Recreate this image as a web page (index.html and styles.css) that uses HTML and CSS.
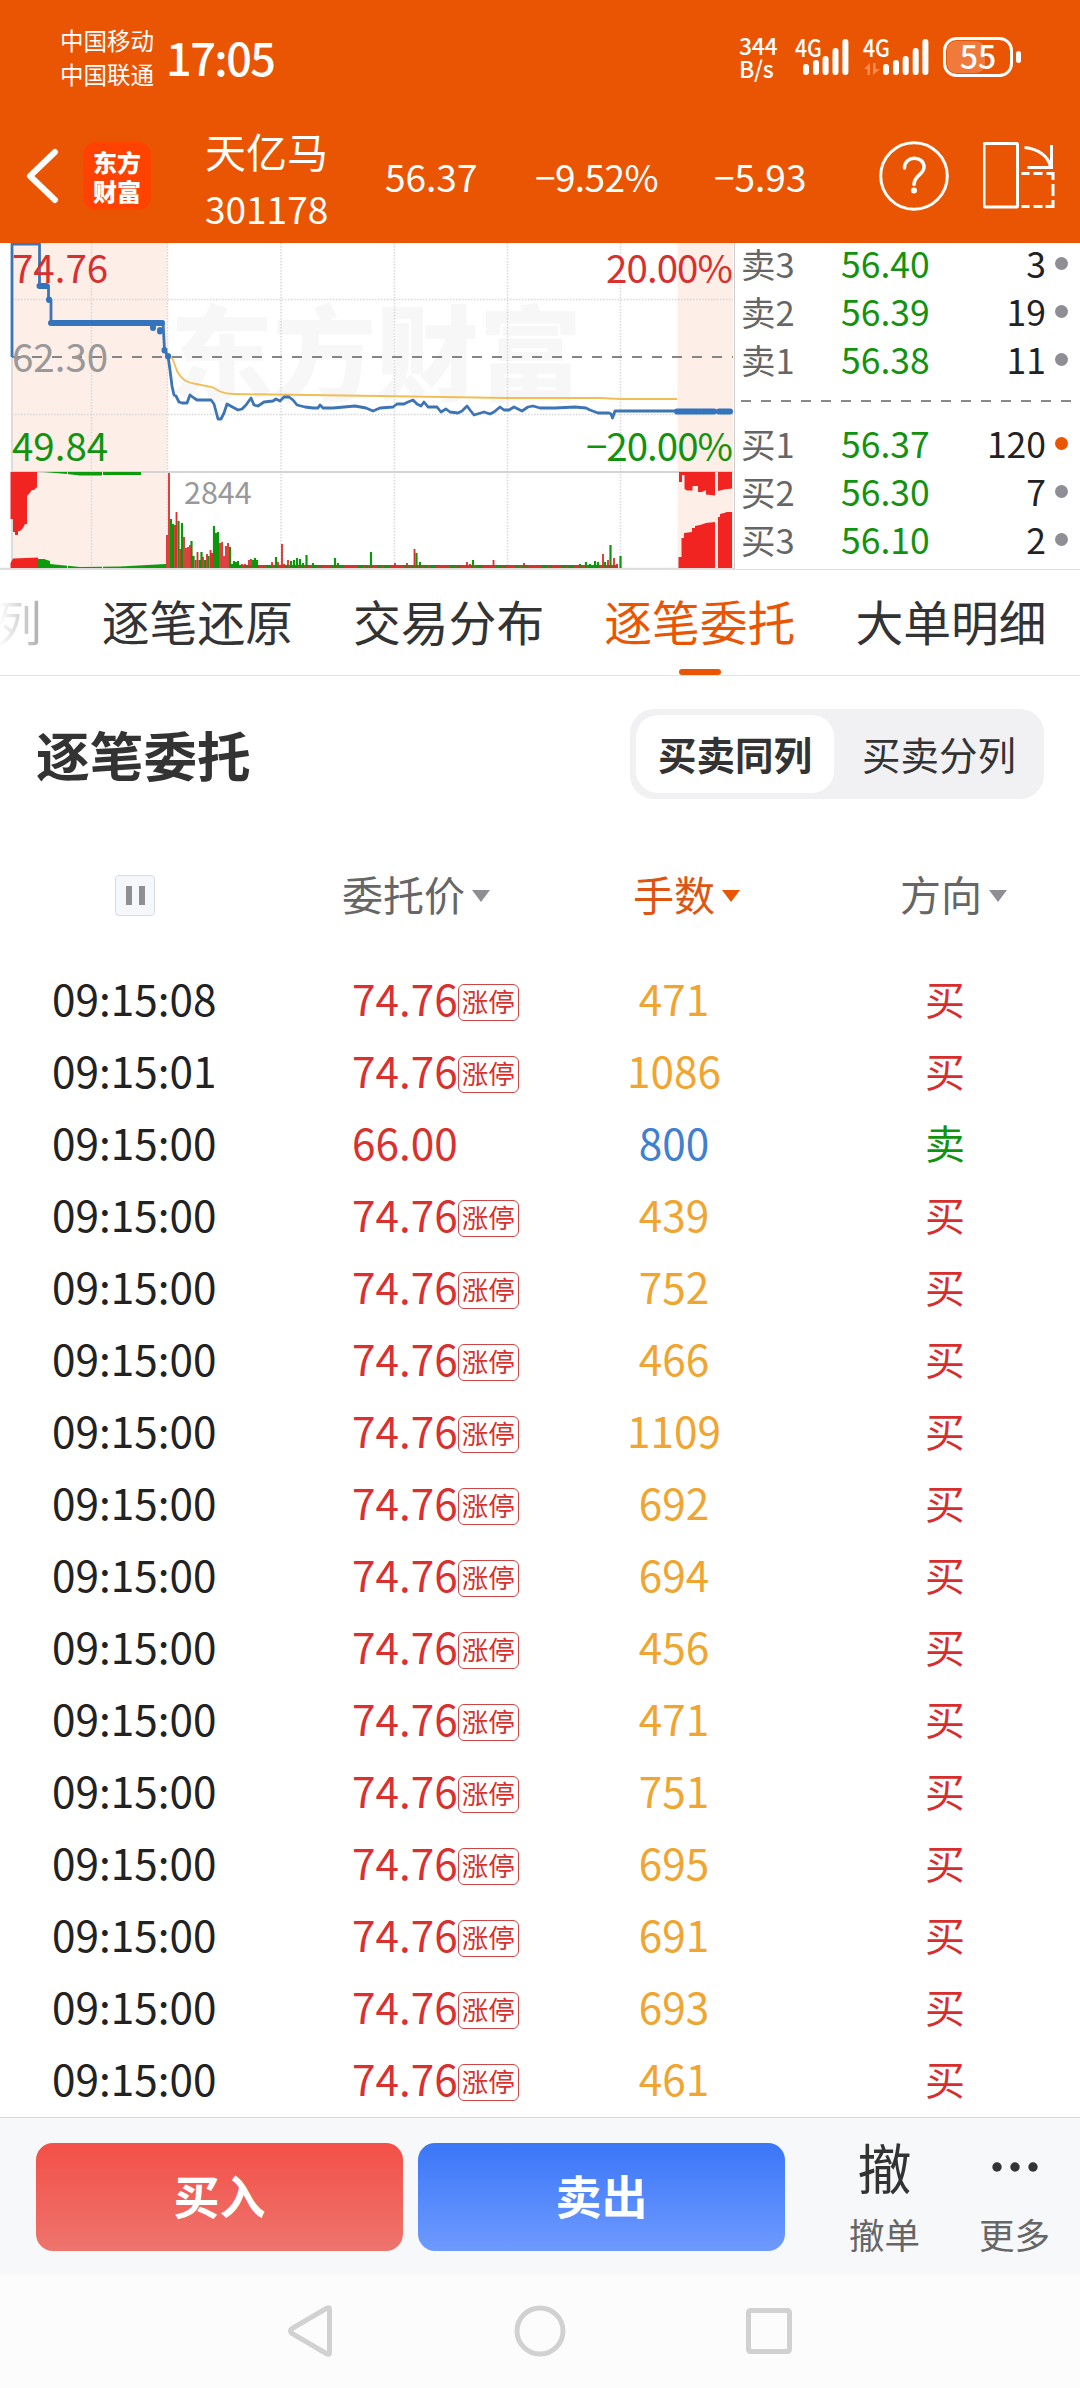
FILE: index.html
```html
<!DOCTYPE html>
<html lang="zh-CN">
<head>
    <meta charset="UTF-8">
    <meta name="viewport" content="width=device-width, initial-scale=1.0">
    <title>天亿马 301178 逐笔委托</title>
    <link rel="stylesheet" href="styles.css">
</head>
<body>
    <header class="top">
        <div class="status-bar">
            <div class="carriers"><span>中国移动</span><span>中国联通</span></div>
            <div class="clock">17:05</div>
            <div class="net-speed"><span>344</span><span>B/s</span></div>
            <!-- signal + battery -->
            <svg class="signal" width="230" height="50" viewBox="794 32 230 50">
                <g stroke="#fff" stroke-width="6" stroke-linecap="round">
                    <path d="M806 67V72M816 63V72M825.6 59V72M835.5 51V72M845.4 42V72"/>
                    <path d="M886 67V72M896 63V72M905.7 59V72M915.7 51V72M925.4 42V72"/>
                </g>
                <path d="M864 69L870 63V75H867.500V69ZM873 63H875.500V69H880L873 75Z" fill="#f98b52"/>
                <rect x="947" y="41" width="38" height="32" rx="9" fill="#f07a3c"/>
                <rect x="944.500" y="38.500" width="67" height="37" rx="12" fill="none" stroke="#fff" stroke-width="3"/>
                <rect x="1016" y="51" width="5" height="12" rx="2.500" fill="#fff"/>
                <text x="795" y="57" class="sig-label" textLength="27" lengthAdjust="spacingAndGlyphs">4G</text>
                <text x="863" y="57" class="sig-label" textLength="27" lengthAdjust="spacingAndGlyphs">4G</text>
                <text x="978" y="69" class="battery-label">55</text>
            </svg>
        </div>
        <div class="stock-bar">
            <svg class="back" width="34" height="56" viewBox="0 0 34 56">
                <path d="M29 4L4 28L29 52" fill="none" stroke="#fff" stroke-width="6" stroke-linecap="round" stroke-linejoin="round"/>
            </svg>
            <div class="logo"><span>东方</span><span>财富</span></div>
            <div class="stock-name"><span class="name">天亿马</span><span class="code">301178</span></div>
            <div class="quote">56.37</div>
            <div class="quote quote-pct">−9.52%</div>
            <div class="quote">−5.93</div>
            <svg class="help" width="70" height="70" viewBox="0 0 70 70">
                <circle cx="35" cy="35" r="33.300" fill="none" stroke="#fff" stroke-width="3"/>
                <path d="M25.500 27C25.500 14 45 14.500 45 26C45 34 35 34 35 43.500" fill="none" stroke="#fff" stroke-width="3.500" stroke-linecap="round"/>
                <circle cx="35" cy="49.500" r="3" fill="#fff"/>
            </svg>
            <svg class="rotate" width="74" height="70" viewBox="982.500 141 74 70">
                <g fill="none" stroke="#fff" stroke-width="3">
                    <rect x="983.500" y="143.500" width="33.500" height="63.500" rx="1"/>
                    <path d="M1024 147.500C1038 149 1048 156 1050 167M1051 145V168M1027 167.500H1052.500"/>
                    <path d="M1021 173.500H1029M1033 173.500H1042M1046 173.500H1052.500V180M1052.500 184V196M1052.500 200V206.500H1045M1021 206.500H1029M1033 206.500H1042"/>
                </g>
            </svg>
        </div>
    </header>

    <section class="market">
        <svg class="chart" width="734" height="326" viewBox="0 243 734 326">
            <rect x="12" y="243" width="155.500" height="325" fill="#fdeee7"/>
            <rect x="677.500" y="243" width="55.500" height="325" fill="#fdeee7"/>
            <text x="170" y="393" class="watermark" textLength="412">东方财富</text>
            <!-- grid -->
            <g fill="none" stroke="#d8d8d8" stroke-width="1.500" stroke-dasharray="1.500 1.500">
                <path d="M91.500 243V568M167.500 243V568M281 243V568M394.500 243V568M507.500 243V568M620.500 243V568"/>
                <path d="M12 299.500H733M12 414.500H733"/>
            </g>
            <path d="M12 357V568" stroke="#dcdcdc" stroke-width="2"/>
            <path d="M0 568.500H734" stroke="#dcdcdc" stroke-width="1.500"/>
            <path d="M12 472H733" stroke="#d4d4d4" stroke-width="2"/>
            <path d="M12 357H733" stroke="#858585" stroke-width="2" stroke-dasharray="10 10"/>
            <!-- average price -->
            <path d="M169 354L173 360L177 371Q180 377 186 381Q190 383 196 384L212 387L220 391.500Q226 394 234 394L380 396L507 398H600L620 399H677" fill="none" stroke="#f3bd55" stroke-width="1.800"/>
            <!-- price -->
            <path d="M12 357V244H39.500V286H48.500V300H51V322H163L164.500 350L168 356L170 370L172 386L174 395L176 396L179 402L182 403H187L190 395L194 398L197 400H211L214 404L218 419H221L224 413L227 404L238 410L242 409L246 405L251 398L254 405L258 406L264 402L273 401L276 399L280 401L284 397H289L293 400L297 405L305 407L313 408L318 408L320 405L323 408H333L355 406L366 408L373 411L380 408L393 407L397 404H404L408 402L413 400L417 404L421 406L424 402L428 407H437L441 412L446 409L450 412L458 413L462 411L467 406L470 410L474 415L484 412L490 414L494 412L500 407L504 410L509 410L514 407L522 411L528 407L533 406L540 408H555L575 407L586 408L590 410L598 413H609L611 414L612.500 418L615 411H677" fill="none" stroke="#3d74b5" stroke-width="2.800" stroke-linejoin="round"/>
            <path d="M39.500 286H46.500M51 323H162M153 327V328M160 330V331.500M164.500 350V350.500M168 356V356.500M49 299.500V300M677 411.500H714M719 411.500H730" fill="none" stroke="#3474bd" stroke-width="6" stroke-linecap="round"/>
            <!-- call auction volume -->
            <path d="M10.500 472V519H13V532H15V535H18V531H20L23 528L25 524H27V496L29 494L32 490H34L37 487V472ZM10.500 568V563L13 558.500L38 557.500V568Z" fill="#f22422"/>
            <path d="M43 472H141V475H103L102 475.500H80L67 474ZM38 568V559H44L50 561V564L60 565L80 567L120 566.500L166 564V568Z" fill="#0b9b0b"/>
            <path d="M679 472V482H682V475H684.500V489L687 490.500H692.500V486H698V492H702L706 490V494.500L715 495.500V472ZM718 472V491L724 489.500L732 488.500V472Z" fill="#f22422"/>
            <path d="M678.500 568V557H681.500V538H684V533L692 532V528H695V526L700 525L706 523L715 522V568ZM718 568V517H720V514L724 513L727 512H732V568Z" fill="#f22422"/>
            <path d="M67.500 472V568M102.500 472V568" stroke="#fdeee7" stroke-width="1"/>
            <!-- minute volume -->
            <path d="M230 566.500H618" stroke="#12940f" stroke-width="2.800"/>
            <path d="M230 566.500H618" stroke="#d63030" stroke-width="2.800" stroke-dasharray="9 4 3 6 14 5 2 3"/>
            <path d="M171 568V519M173 568V524M178.500 568V521M182 568V523M191.500 568V541M193.500 568V556M199.500 568V560M201.500 568V552M205 568V560M208.500 568V556M214 568V526M216 568V533M218 568V532M230 568V547M232 568V564M234 568V561M236 568V562M238 568V561M253 568V560M255 568V558M257 568V560M276 568V557M291 568V561M294 568V560M297 568V558M300 568V559M303 568V563M306.500 568V555M313 568V563M335 568V558M338 568V563M371 568V552M416.500 568V553M420 568V562M473 568V560M580 568V564M586 568V562M590 568V564M595 568V561M598 568V562M605 568V562M610.500 568V545M620.500 568V556" stroke="#0b960b" stroke-width="2.200"/>
            <path d="M167 568V535M169 568V473M175 568V525M176.500 568V512M180.200 568V549M184 568V537M186 568V548M188 568V547M190 568V545M195.500 568V560M197.500 568V552M203 568V557M207 568V554M210.500 568V550M212.300 568V553M220 568V543M222 568V542M224 568V556M226 568V546M228 568V543M242 568V564M245 568V564M249 568V560M251 568V559M272 568V562M278 568V562M282 568V544M284 568V564M288 568V560M395 568V563M407 568V563M414.500 568V549M467 568V562M470 568V564M493.500 568V560M524 568V563M603 568V554M608 568V560M614 568V558M617 568V564" stroke="#dc2c2c" stroke-width="1.800"/>
            <!-- labels -->
            <g class="axis">
                <text x="12" y="283" class="up">74.76</text>
                <text x="12" y="372" class="flat">62.30</text>
                <text x="12" y="461" class="down">49.84</text>
                <text x="733" y="283" class="up end" textLength="127">20.00%</text>
                <text x="733" y="461" class="down end" textLength="147">−20.00%</text>
                <text x="184" y="504" class="flat vol">2844</text>
            </g>
        </svg>
        <div class="order-book">
            <div class="level"><span>卖3</span><b>56.40</b><em>3</em><i></i></div>
            <div class="level"><span>卖2</span><b>56.39</b><em>19</em><i></i></div>
            <div class="level"><span>卖1</span><b>56.38</b><em>11</em><i></i></div>
            <div class="spread"></div>
            <div class="level"><span>买1</span><b>56.37</b><em>120</em><i class="hot"></i></div>
            <div class="level"><span>买2</span><b>56.30</b><em>7</em><i></i></div>
            <div class="level"><span>买3</span><b>56.10</b><em>2</em><i></i></div>
        </div>
    </section>

    <nav class="tabs">
        <a class="tab tab-faded">列</a>
        <a class="tab">逐笔还原</a>
        <a class="tab">交易分布</a>
        <a class="tab tab-active">逐笔委托</a>
        <a class="tab">大单明细</a>
    </nav>

    <main class="orders">
        <div class="orders-head">
            <h1>逐笔委托</h1>
            <div class="switch"><span class="on">买卖同列</span><span>买卖分列</span></div>
        </div>

        <div class="row row-head">
            <div class="pause"><i></i><i></i></div>
            <div class="col-price"><span>委托价</span><i class="caret"></i></div>
            <div class="col-qty sorted"><span>手数</span><i class="caret"></i></div>
            <div class="col-side"><span>方向</span><i class="caret"></i></div>
        </div>

        <div class="list">
            <div class="row"><span>09:15:08</span><span class="price">74.76<small>涨停</small></span><span class="qty">471</span><span class="side">买</span></div>
            <div class="row"><span>09:15:01</span><span class="price">74.76<small>涨停</small></span><span class="qty">1086</span><span class="side">买</span></div>
            <div class="row"><span>09:15:00</span><span class="price">66.00</span><span class="qty qty-blue">800</span><span class="side sell">卖</span></div>
            <div class="row"><span>09:15:00</span><span class="price">74.76<small>涨停</small></span><span class="qty">439</span><span class="side">买</span></div>
            <div class="row"><span>09:15:00</span><span class="price">74.76<small>涨停</small></span><span class="qty">752</span><span class="side">买</span></div>
            <div class="row"><span>09:15:00</span><span class="price">74.76<small>涨停</small></span><span class="qty">466</span><span class="side">买</span></div>
            <div class="row"><span>09:15:00</span><span class="price">74.76<small>涨停</small></span><span class="qty">1109</span><span class="side">买</span></div>
            <div class="row"><span>09:15:00</span><span class="price">74.76<small>涨停</small></span><span class="qty">692</span><span class="side">买</span></div>
            <div class="row"><span>09:15:00</span><span class="price">74.76<small>涨停</small></span><span class="qty">694</span><span class="side">买</span></div>
            <div class="row"><span>09:15:00</span><span class="price">74.76<small>涨停</small></span><span class="qty">456</span><span class="side">买</span></div>
            <div class="row"><span>09:15:00</span><span class="price">74.76<small>涨停</small></span><span class="qty">471</span><span class="side">买</span></div>
            <div class="row"><span>09:15:00</span><span class="price">74.76<small>涨停</small></span><span class="qty">751</span><span class="side">买</span></div>
            <div class="row"><span>09:15:00</span><span class="price">74.76<small>涨停</small></span><span class="qty">695</span><span class="side">买</span></div>
            <div class="row"><span>09:15:00</span><span class="price">74.76<small>涨停</small></span><span class="qty">691</span><span class="side">买</span></div>
            <div class="row"><span>09:15:00</span><span class="price">74.76<small>涨停</small></span><span class="qty">693</span><span class="side">买</span></div>
            <div class="row"><span>09:15:00</span><span class="price">74.76<small>涨停</small></span><span class="qty">461</span><span class="side">买</span></div>
        </div>
    </main>

    <footer class="trade-bar">
        <button class="btn btn-buy">买入</button>
        <button class="btn btn-sell">卖出</button>
        <div class="action"><span class="glyph">撤</span><span class="caption">撤单</span></div>
        <div class="action">
            <span class="glyph"><svg width="46" height="10" viewBox="0 0 46 10"><g fill="#333"><circle cx="5" cy="5" r="4.700"/><circle cx="23" cy="5" r="4.700"/><circle cx="41" cy="5" r="4.700"/></g></svg></span>
            <span class="caption">更多</span>
        </div>
    </footer>

    <div class="sys-nav">
        <svg width="50" height="56" viewBox="0 0 50 56"><path d="M43.500 6V50Q43.500 52 41 51L6 30.500Q3 28 6 25.500L41 5Q43.500 4 43.500 6Z"/></svg>
        <svg width="56" height="56" viewBox="0 0 56 56"><circle cx="28" cy="28" r="23"/></svg>
        <svg width="50" height="56" viewBox="0 0 50 56"><rect x="4.500" y="7.500" width="41" height="41" rx="2"/></svg>
    </div>
</body>
</html>
```
FILE: styles.css
```css
* {
    box-sizing: border-box;
}
body {
    margin: 0;
    width: 1080px;
    height: 2388px;
    overflow: hidden;
    display: flex;
    flex-direction: column;
    background: #fff;
    color: #222;
    font-family: "Noto Sans CJK SC", "Noto Sans", sans-serif;
}
i, em {
    font-style: normal;
}

/* header */
.top {
    height: 243px;
    background: #ea5504;
    color: #fff;
    flex: none;
}
.status-bar {
    height: 114px;
    display: flex;
    align-items: center;
    padding-left: 60px;
}
.carriers {
    width: 106px;
    display: flex;
    flex-direction: column;
    font-size: 23.5px;
    line-height: 34px;
}
.clock {
    width: 573px;
    font-size: 45px;
    font-weight: 500;
    line-height: 60px;
    letter-spacing: -1.5px;
}
.net-speed {
    width: 55px;
    display: flex;
    flex-direction: column;
    font-size: 23px;
    font-weight: 500;
    line-height: 23px;
    letter-spacing: -0.3px;
}
.sig-label {
    fill: #fff;
    font-size: 24px;
    font-weight: 500;
}
.battery-label {
    fill: #fff;
    font-size: 32px;
    font-weight: 500;
    text-anchor: middle;
}
.stock-bar {
    height: 129px;
    display: grid;
    grid-template-columns: 57px 122px 180px 150px 179px 165px 104px 74px;
    align-items: center;
    padding: 0 0 6px 26px;
}
.logo {
    width: 68px;
    height: 68px;
    border-radius: 13px;
    background: #ff4200;
    display: flex;
    flex-direction: column;
    align-items: center;
    justify-content: center;
    font-size: 24px;
    font-weight: 900;
    line-height: 29px;
}
.stock-name {
    display: flex;
    flex-direction: column;
    padding-top: 8px;
}
.name {
    font-size: 41px;
    line-height: 56px;
}
.code {
    font-size: 37px;
    line-height: 60px;
}
.quote {
    font-size: 37px;
    line-height: 60px;
}
.quote-pct {
    letter-spacing: -0.6px;
}

/* chart + order book */
.market {
    height: 327px;
    display: flex;
    flex: none;
    border-bottom: 1px solid #e0e0e0;
    overflow: hidden;
}
.chart {
    flex: none;
}
.watermark {
    font-size: 103px;
    font-weight: 900;
    fill: #f7f7f7;
}
.axis text {
    font-size: 38.5px;
}
.axis .vol {
    font-size: 30.5px;
}
.axis .end {
    text-anchor: end;
}
.up {
    fill: #d83030;
}
.down {
    fill: #12930f;
}
.flat {
    fill: #999;
}
.order-book {
    flex: 1;
    border-left: 1px solid #ccc;
    padding-left: 6px;
    margin-top: -4px;
}
.level {
    height: 48px;
    display: grid;
    grid-template-columns: 100px 100px 105px 23px;
    align-items: center;
    font-size: 35.5px;
    line-height: 48px;
}
.level span {
    color: #666;
    font-size: 34.5px;
}
.level b {
    color: #12930f;
    font-weight: 400;
}
.level em {
    text-align: right;
}
.level i {
    width: 13px;
    height: 13px;
    margin-left: 9px;
    border-radius: 50%;
    background: #8f8e94;
}
.level .hot {
    background: #ea5504;
}
.spread {
    height: 36px;
    background: repeating-linear-gradient(90deg, #888 0 10px, transparent 10px 20px) 0 17px / 330px 2px no-repeat;
}

/* tabs */
.tabs {
    height: 106px;
    flex: none;
    display: flex;
    gap: 60px;
    overflow: hidden;
    border-bottom: 1px solid #e2e2e2;
}
.tab {
    flex: none;
    position: relative;
    color: #333;
    font-size: 47.8px;
    line-height: 101px;
}
.tab-faded {
    margin-left: -6px;
    background: linear-gradient(90deg, #fff 10%, #aaa);
    -webkit-background-clip: text;
    background-clip: text;
    color: transparent;
}
.tab-active {
    color: #ea5504;
}
.tab-active::after {
    content: "";
    position: absolute;
    left: 75px;
    bottom: 0;
    width: 42px;
    height: 6px;
    border-radius: 3px;
    background: #ea5504;
}

/* orders */
.orders {
    height: 1441px;
    flex: none;
}
.orders-head {
    height: 156px;
    display: flex;
    align-items: center;
    justify-content: space-between;
    padding: 0 36px;
}
h1 {
    margin: 0;
    color: #333;
    font-size: 53.7px;
    font-weight: 700;
    line-height: 78px;
}
.switch {
    width: 414px;
    height: 90px;
    padding: 6px;
    border-radius: 24px;
    background: #f1f1f3;
    display: flex;
    color: #333;
    font-size: 38.5px;
    line-height: 76px;
    text-align: center;
}
.switch span {
    width: 210px;
    flex: none;
}
.switch .on {
    width: 198px;
    border-radius: 22px;
    background: #fff;
    font-weight: 700;
}
.row {
    height: 72px;
    display: grid;
    grid-template-columns: 300px 223px 198px 340px;
    align-items: center;
    padding-left: 52px;
    font-size: 42.3px;
    line-height: 72px;
}
.row-head {
    height: 130px;
    grid-template-columns: 227px 291px 267px 200px;
    padding: 0 0 3px 115px;
    color: #666;
    font-size: 41px;
}
.row-head span {
    margin-top: -5px;
}
.pause {
    width: 40px;
    height: 41px;
    display: flex;
    align-items: center;
    justify-content: center;
    gap: 7px;
    border: 1px solid #d8dbe0;
    border-radius: 4px;
    background: #f6f7fa;
}
.pause i {
    width: 6px;
    height: 19px;
    background: #8f8e94;
}
.row-head > div:not(.pause) {
    display: flex;
    align-items: center;
}
.caret {
    margin-left: 7px;
    border: 9px solid transparent;
    border-top: 12px solid #8f8e94;
    border-bottom: 0;
}
.sorted {
    color: #dd5511;
}
.sorted .caret {
    border-top-color: #ea5504;
}
.price {
    display: flex;
    align-items: center;
    color: #d93030;
}
.price small {
    width: 61px;
    height: 37px;
    margin: 8px 0 0 0;
    border: 1px solid #cf4545;
    border-radius: 6px;
    font-size: 26.5px;
    line-height: 31px;
    text-align: center;
}
.qty {
    text-align: center;
    color: #f0a530;
}
.qty-blue {
    color: #3f80d0;
}
.side {
    padding-left: 152px;
    color: #d62e2e;
    font-size: 40px;
}
.sell {
    color: #12930f;
}

/* bottom */
.trade-bar {
    height: 157px;
    flex: none;
    display: grid;
    grid-template-columns: 367px 367px 129px 129px;
    column-gap: 15px;
    align-items: center;
    padding-left: 36px;
    border-top: 1px solid #d3d7da;
    background: #f7f8fa;
}
.btn {
    height: 108px;
    padding: 0 0 6px;
    border: 0;
    border-radius: 17px;
    color: #fff;
    font-family: inherit;
    font-size: 46px;
    font-weight: 700;
}
.btn-buy {
    background: linear-gradient(#f35048, #ed746d);
}
.btn-sell {
    background: linear-gradient(#3b76f8, #6d9aff);
}
.action {
    height: 157px;
    display: flex;
    flex-direction: column;
    align-items: center;
}
.action:nth-of-type(1) {
    padding-left: 40px;
}
.action:nth-of-type(2) {
    padding-left: 12px;
}
.glyph {
    height: 98px;
    display: flex;
    align-items: center;
    color: #333;
    font-size: 54px;
    line-height: 98px;
}
.caption {
    color: #666;
    font-size: 35.5px;
    line-height: 36px;
    white-space: nowrap;
}
.sys-nav {
    height: 114px;
    flex: none;
    display: flex;
    justify-content: center;
    gap: 176px;
    background: #fcfcfc;
}
.sys-nav svg {
    margin-top: 29px;
    fill: none;
    stroke: #d1d1d1;
    stroke-width: 5;
}
```
